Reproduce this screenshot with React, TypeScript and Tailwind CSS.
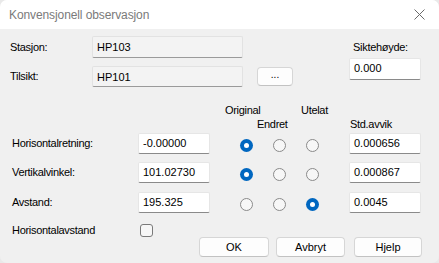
import React from "react";

const F = "font-['Liberation_Sans',Arial,sans-serif]";

function Radio({ checked }: { checked?: boolean }) {
  return checked ? (
    <div className="w-[13px] h-[13px] rounded-full bg-[#0067c0] flex items-center justify-center">
      <div className="w-[5px] h-[5px] rounded-full bg-white" />
    </div>
  ) : (
    <div className="w-[13px] h-[13px] rounded-full border border-[#8a8a8a] bg-[#f7f7f7]" />
  );
}

function Field({ value, w = "w-[72px]", h = "h-[21px]" }: { value: string; w?: string; h?: string }) {
  return (
    <div className={`${w} ${h} bg-white border border-[#e6e6e6] border-b-[#8a8a8a] rounded-[2px] pl-[4px] pt-[2px] text-[11px] leading-[14px] text-black`}>
      {value}
    </div>
  );
}

function RoField({ value, h }: { value: string; h: string }) {
  return (
    <div className={`w-[151px] ${h} bg-[#f3f3f3] border border-[#e2e2e2] border-b-[#9a9a9a] rounded-[2px] pl-[4px] pt-[3px] text-[11px] leading-[14px] text-black`}>
      {value}
    </div>
  );
}

function Btn({ label, w }: { label: string; w: string }) {
  return (
    <div className={`${w} h-[20px] bg-[#fdfdfd] border border-[#d6d6d6] border-b-[#c2c2c2] rounded-[4px] flex items-center justify-center text-[11px] text-black`}>
      {label}
    </div>
  );
}

function DataRow({ label, value, sel, std, mt }: { label: string; value: string; sel: number; std: string; mt: string }) {
  return (
    <div className={`flex items-center h-[21px] ${mt}`}>
      <div className="w-[128px] pl-[2px] tracking-[-0.3px]">{label}</div>
      <Field value={value} />
      <div className="flex pt-[4px] ml-[30px] gap-[20px]">
        <Radio checked={sel === 0} />
        <Radio checked={sel === 1} />
        <Radio checked={sel === 2} />
      </div>
      <div className="ml-[30px]">
        <Field value={std} />
      </div>
    </div>
  );
}

export default function App() {
  return (
    <div className={`w-[439px] h-[263px] bg-[#e9e9e9] ${F} text-[11px] text-black overflow-hidden`}>
      <div className="w-[439px] h-[263px] rounded-[7px] overflow-hidden flex flex-col bg-[#f0f0f0]">
        <div className="h-[29px] bg-white flex items-center pl-[9px] pr-[10px] shrink-0">
          <div className="text-[12px] text-[#7a7a7a] tracking-[-0.1px] pt-[1px]">Konvensjonell observasjon</div>
          <svg className="ml-auto mr-[4px]" width="11" height="11" viewBox="0 0 11 11">
            <path d="M0.5 0.5 L10.5 10.5 M10.5 0.5 L0.5 10.5" stroke="#6a6a6a" strokeWidth="1" fill="none" />
          </svg>
        </div>

        <div className="flex-1 pl-[10px] flex flex-col">
          <div className="flex mt-[7px]">
            <div className="flex flex-col gap-[8px]">
              <div className="flex items-center h-[22px]">
                <div className="w-[82px] tracking-[-0.3px]">Stasjon:</div>
                <RoField value="HP103" h="h-[22px]" />
              </div>
              <div className="flex items-center h-[21px]">
                <div className="w-[82px] tracking-[-0.3px]">Tilsikt:</div>
                <RoField value="HP101" h="h-[21px]" />
              </div>
            </div>
            <div className="ml-[14px] mt-[31px]">
              <div className="w-[36px] h-[19px] bg-[#fdfdfd] border border-[#d6d6d6] border-b-[#c2c2c2] rounded-[4px] flex items-center justify-center text-[10px] leading-none pb-[3px]">
                ...
              </div>
            </div>
            <div className="ml-[56px] flex flex-col">
              <div className="h-[22px] flex items-center pl-[4px] tracking-[-0.3px]">Siktehøyde:</div>
              <Field value="0.000" h="h-[22px]" />
            </div>
          </div>

          <div className="flex mt-[16px] h-[14px] leading-[14px] tracking-[-0.3px]">
            <div className="w-[215px]" />
            <div className="w-[76px]">Original</div>
            <div>Utelat</div>
          </div>
          <div className="flex h-[14px] leading-[14px] tracking-[-0.3px]">
            <div className="w-[247px]" />
            <div className="w-[93px]">Endret</div>
            <div>Std.avvik</div>
          </div>

          <DataRow label="Horisontalretning:" value="-0.00000" sel={0} std="0.000656" mt="mt-[2px]" />
          <DataRow label="Vertikalvinkel:" value="101.02730" sel={0} std="0.000867" mt="mt-[8px]" />
          <DataRow label="Avstand:" value="195.325" sel={2} std="0.0045" mt="mt-[9px]" />

          <div className="flex items-center h-[13px] mt-[11px]">
            <div className="w-[128px] pl-[2px] tracking-[-0.3px]">Horisontalavstand</div>
            <div className="ml-[2px] w-[13px] h-[13px] rounded-[3px] border border-[#7a7a7a] bg-[#f7f7f7]" />
          </div>

          <div className="flex h-[20px]">
            <div className="w-[189px]" />
            <Btn label="OK" w="w-[70px]" />
            <div className="w-[7px]" />
            <Btn label="Avbryt" w="w-[69px]" />
            <div className="w-[9px]" />
            <Btn label="Hjelp" w="w-[68px]" />
          </div>
        </div>
      </div>
    </div>
  );
}
